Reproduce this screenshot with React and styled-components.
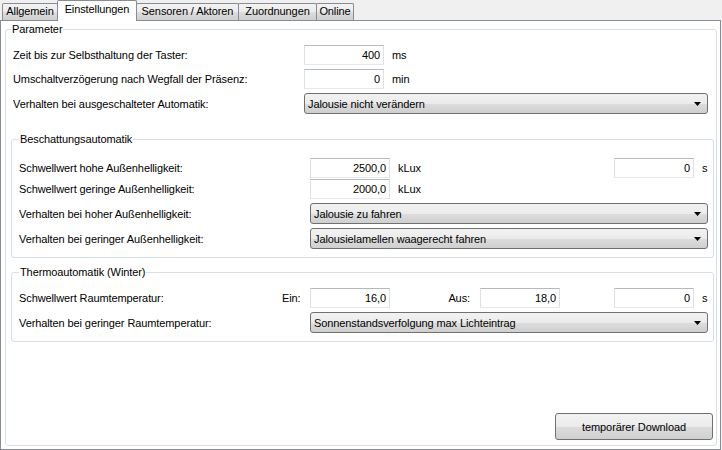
import React from 'react'
import styled, { createGlobalStyle } from 'styled-components'

const GlobalStyle = createGlobalStyle`
  html, body {
    margin: 0;
    padding: 0;
    background: #f0f0f0;
  }
  body {
    font-family: "Liberation Sans", Arial, sans-serif;
    font-size: 11px;
    letter-spacing: -0.1px;
    color: #000;
  }
`

const Window = styled.div`
  width: 722px;
  height: 450px;
  display: flex;
  flex-direction: column;
  background: #f0f0f0;
  overflow: hidden;
`

const TabStrip = styled.div`
  height: 20px;
  display: flex;
  align-items: flex-start;
  padding-left: 2px;
`

const Tab = styled.div`
  box-sizing: border-box;
  width: ${p => p.$w}px;
  margin-left: -1px;
  &:first-child { margin-left: 0; }
  margin-top: ${p => (p.$active ? 0 : 3)}px;
  height: ${p => (p.$active ? 21 : 17)}px;
  border: 1px solid #898c95;
  border-bottom: none;
  border-radius: 2px 2px 0 0;
  background: ${p => (p.$active
    ? '#fff'
    : 'linear-gradient(#f3f3f3 0%, #ebebeb 50%, #dddddd 51%, #cfcfcf 100%)')};
  position: relative;
  z-index: ${p => (p.$active ? 2 : 1)};
  text-align: center;
  line-height: ${p => (p.$active ? 17 : 15)}px;
  white-space: nowrap;
`

const Page = styled.div`
  box-sizing: border-box;
  width: 721px;
  height: 430px;
  border: 1px solid #898c95;
  background: #fff;
  padding: 2px 3px 3px 4px;
  display: flex;
  flex-direction: column;
`

const Group = styled.fieldset`
  margin: ${p => p.$mt || 0}px 0 0 0;
  min-width: 0;
  border: 1px solid #d5dfe5;
  border-radius: 3px;
  padding: ${p => p.$pad};
  display: flex;
  flex-direction: column;
  flex: ${p => (p.$grow ? 1 : 'none')};
`

const Legend = styled.legend`
  padding: 0 1px;
  line-height: 13px;
  font-size: 11px;
`

const Row = styled.div`
  display: flex;
  align-items: center;
  height: ${p => p.$h || 20}px;
  margin-top: ${p => (p.$gap === undefined ? 4 : p.$gap)}px;
  padding: ${p => p.$pad || 0};
  &:first-of-type { margin-top: 0; }
`

const Label = styled.span`
  width: ${p => p.$w}px;
  flex: none;
  white-space: nowrap;
`

const Prefix = styled.span`
  width: ${p => p.$w}px;
  flex: none;
  box-sizing: border-box;
  text-align: right;
  padding-right: 10px;
`

const Field = styled.div`
  box-sizing: border-box;
  width: 80px;
  height: 20px;
  flex: none;
  margin-left: ${p => p.$push || 0}px;
  border: 1px solid #dbdfe6;
  border-top-color: #b5b8bf;
  border-bottom-color: #e3e9ef;
  background: #fff;
  text-align: right;
  padding-right: 3px;
  line-height: 18px;
`

const Unit = styled.span`
  box-sizing: border-box;
  padding-left: 8px;
  width: ${p => (p.$w ? `${p.$w}px` : 'auto')};
  flex: none;
`

const Combo = styled.div`
  flex: 1;
  height: 21px;
  box-sizing: border-box;
  border: 1px solid #707070;
  border-radius: 3px;
  background: linear-gradient(#f2f2f2 0%, #ebebeb 50%, #dddddd 51%, #cfcfcf 100%);
  display: flex;
  align-items: center;
  padding: 0 3px 0 3px;
`

const ComboText = styled.span`
  flex: 1;
  white-space: nowrap;
`

const Arrow = () => (
  <svg width="7" height="4" viewBox="0 0 7 4" style={{ marginRight: 3 }}>
    <path d="M0 0H7L3.5 4Z" fill="#000" />
  </svg>
)

const Select = ({ children }) => (
  <Combo>
    <ComboText>{children}</ComboText>
    <Arrow />
  </Combo>
)

const Button = styled.button`
  margin-top: 71px;
  align-self: flex-end;
  margin-right: 1px;
  width: 158px;
  height: 27px;
  border: 1px solid #707070;
  border-radius: 3px;
  background: linear-gradient(#f2f2f2 0%, #ebebeb 50%, #dddddd 51%, #cfcfcf 100%);
  font-family: inherit;
  font-size: 11px;
  letter-spacing: -0.1px;
  color: #000;
  padding: 0;
`

const tabs = [
  ['Allgemein', 56],
  ['Einstellungen', 80],
  ['Sensoren / Aktoren', 103],
  ['Zuordnungen', 79],
  ['Online', 38],
]

export default function App() {
  return (
    <>
      <GlobalStyle />
      <Window>
        <TabStrip>
          {tabs.map(([t, w], i) => (
            <Tab key={t} $w={w} $active={i === 1}>{t}</Tab>
          ))}
        </TabStrip>
        <Page>
          <Group $grow $pad="9px 2px 5px 5px">
            <Legend>Parameter</Legend>
            <Row $pad="0 6px 0 2px">
              <Label $w={291}>Zeit bis zur Selbsthaltung der Taster:</Label>
              <Field>400</Field>
              <Unit>ms</Unit>
            </Row>
            <Row $pad="0 6px 0 2px">
              <Label $w={291}>Umschaltverzögerung nach Wegfall der Präsenz:</Label>
              <Field>0</Field>
              <Unit>min</Unit>
            </Row>
            <Row $pad="0 6px 0 2px" $h={21}>
              <Label $w={291}>Verhalten bei ausgeschalteter Automatik:</Label>
              <Select>Jalousie nicht verändern</Select>
            </Row>

            <Group $mt={19} $pad="12px 5px 8px 7px">
              <Legend>Beschattungsautomatik</Legend>
              <Row>
                <Label $w={291}>Schwellwert hohe Außenhelligkeit:</Label>
                <Field>2500,0</Field>
                <Unit $w={224}>kLux</Unit>
                <Field>0</Field>
                <Unit>s</Unit>
              </Row>
              <Row $gap={1}>
                <Label $w={291}>Schwellwert geringe Außenhelligkeit:</Label>
                <Field>2000,0</Field>
                <Unit>kLux</Unit>
              </Row>
              <Row $h={21}>
                <Label $w={291}>Verhalten bei hoher Außenhelligkeit:</Label>
                <Select>Jalousie zu fahren</Select>
              </Row>
              <Row $h={21}>
                <Label $w={291}>Verhalten bei geringer Außenhelligkeit:</Label>
                <Select>Jalousielamellen waagerecht fahren</Select>
              </Row>
            </Group>

            <Group $mt={8} $pad="9px 5px 8px 7px">
              <Legend>Thermoautomatik (Winter)</Legend>
              <Row>
                <Label $w={263}>Schwellwert Raumtemperatur:</Label>
                <Prefix $w={28}>Ein:</Prefix>
                <Field>16,0</Field>
                <Prefix $w={90}>Aus:</Prefix>
                <Field>18,0</Field>
                <Field $push={54}>0</Field>
                <Unit>s</Unit>
              </Row>
              <Row $h={21}>
                <Label $w={291}>Verhalten bei geringer Raumtemperatur:</Label>
                <Select>Sonnenstandsverfolgung max Lichteintrag</Select>
              </Row>
            </Group>

            <Button>temporärer Download</Button>
          </Group>
        </Page>
      </Window>
    </>
  )
}
